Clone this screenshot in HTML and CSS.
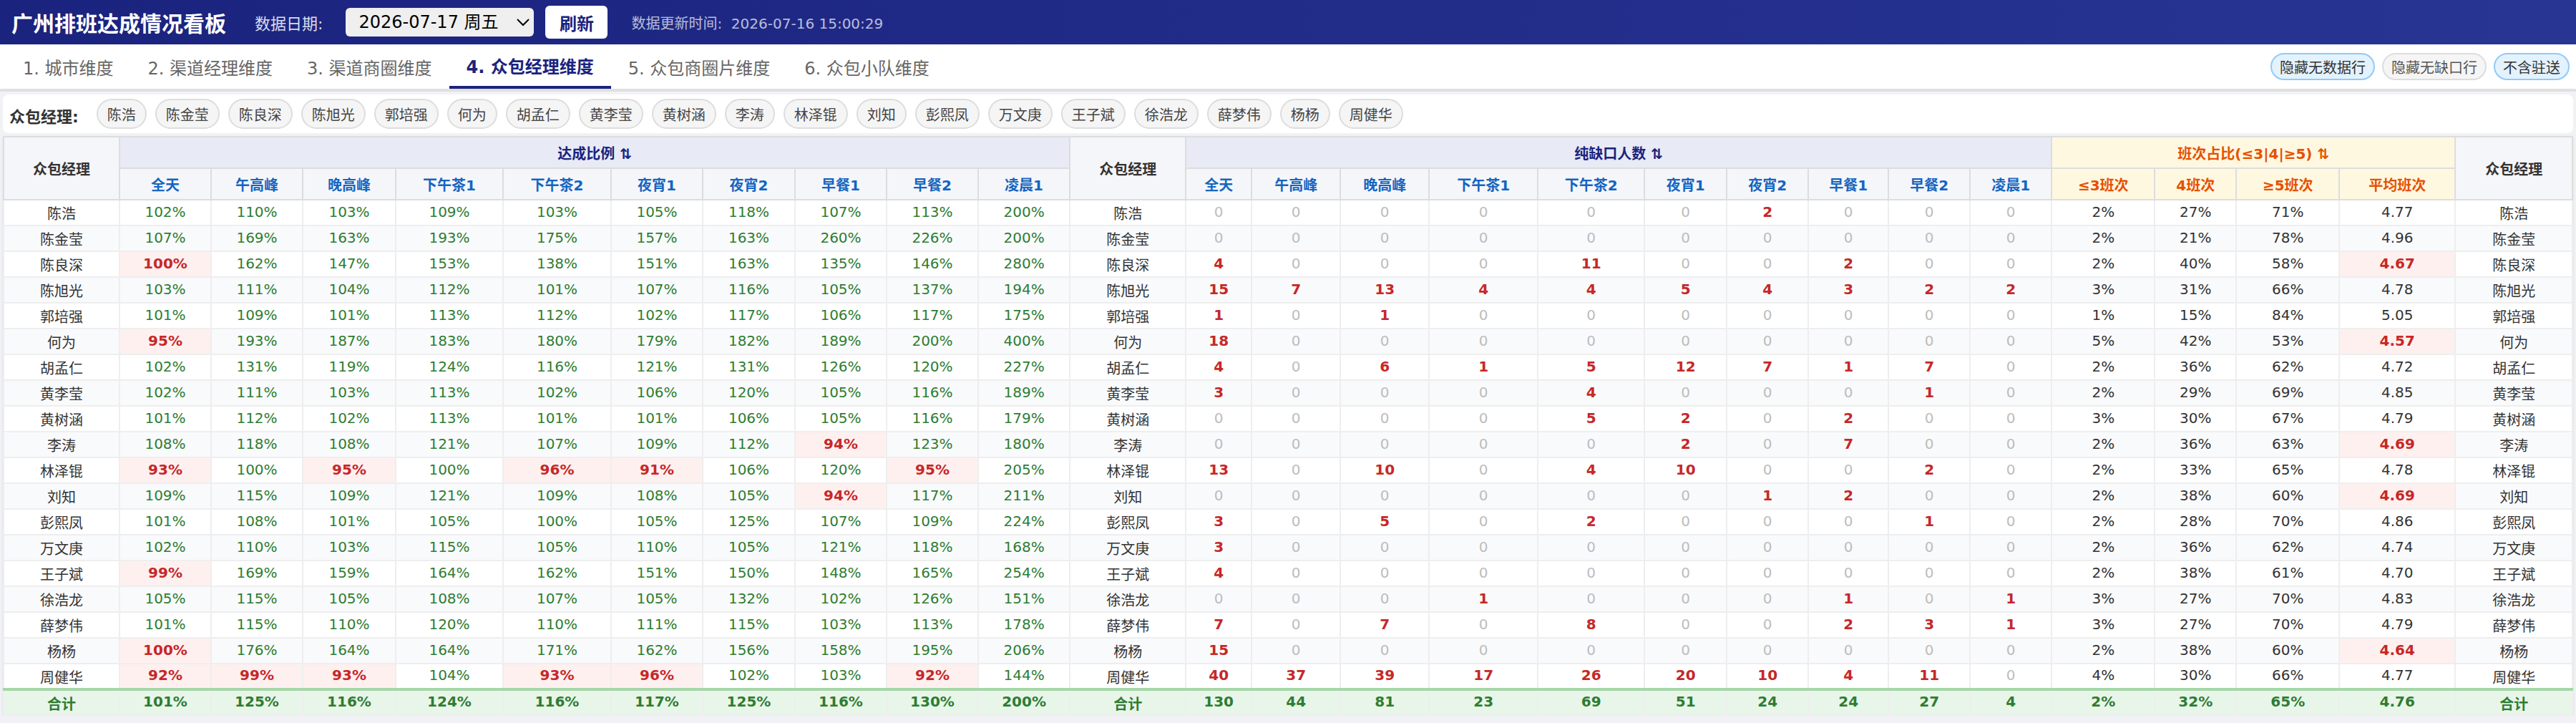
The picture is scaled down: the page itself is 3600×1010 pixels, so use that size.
FILE: index.html
```html
<!doctype html>
<html lang="zh">
<head>
<meta charset="utf-8">
<title>广州排班达成情况看板</title>
<link rel="stylesheet" href="styles.css">
</head>
<body>
<div class="top">
	<h1>广州排班达成情况看板</h1>
	<span class="top-label">数据日期:</span>
	<select class="date"><option>2026-07-17 周五</option></select>
	<button class="refresh">刷新</button>
	<span class="updated">数据更新时间:&nbsp;&nbsp;2026-07-16 15:00:29</span>
</div>
<div class="tabs">
	<a class="tab">1. 城市维度</a>
	<a class="tab">2. 渠道经理维度</a>
	<a class="tab">3. 渠道商圈维度</a>
	<a class="tab on">4. 众包经理维度</a>
	<a class="tab">5. 众包商圈片维度</a>
	<a class="tab">6. 众包小队维度</a>
	<div class="toggles">
		<span class="toggle on">隐藏无数据行</span>
		<span class="toggle">隐藏无缺口行</span>
		<span class="toggle on">不含驻送</span>
	</div>
</div>
<div class="filter">
	<b class="filter-label">众包经理:</b>
	<span class="chip">陈浩</span><span class="chip">陈金莹</span><span class="chip">陈良深</span><span class="chip">陈旭光</span><span class="chip">郭培强</span><span class="chip">何为</span><span class="chip">胡孟仁</span><span class="chip">黄李莹</span><span class="chip">黄树涵</span><span class="chip">李涛</span><span class="chip">林泽锟</span><span class="chip">刘知</span><span class="chip">彭熙凤</span><span class="chip">万文庚</span><span class="chip">王子斌</span><span class="chip">徐浩龙</span><span class="chip">薛梦伟</span><span class="chip">杨杨</span><span class="chip">周健华</span>
</div>
<div class="wrap">
<table>
	<colgroup>
		<col class="w162"><col class="w128"><col class="w128"><col class="w130"><col class="w150"><col class="w151"><col class="w128"><col class="w129"><col class="w128"><col class="w128"><col class="w128">
		<col class="w162"><col class="w92"><col class="w124"><col class="w124"><col class="w152"><col class="w149"><col class="w115"><col class="w114"><col class="w112"><col class="w114"><col class="w114">
		<col class="w144"><col class="w114"><col class="w144"><col class="w162"><col class="w164">
	</colgroup>
	<thead>
		<tr>
			<th class="name-h" rowspan="2">众包经理</th>
			<th class="group" colspan="10">达成比例 ⇅</th>
			<th class="name-h" rowspan="2">众包经理</th>
			<th class="group" colspan="10">纯缺口人数 ⇅</th>
			<th class="group shift" colspan="4">班次占比(≤3|4|≥5) ⇅</th>
			<th class="name-h" rowspan="2">众包经理</th>
		</tr>
		<tr>
			<th>全天</th><th>午高峰</th><th>晚高峰</th><th>下午茶1</th><th>下午茶2</th><th>夜宵1</th><th>夜宵2</th><th>早餐1</th><th>早餐2</th><th>凌晨1</th>
			<th>全天</th><th>午高峰</th><th>晚高峰</th><th>下午茶1</th><th>下午茶2</th><th>夜宵1</th><th>夜宵2</th><th>早餐1</th><th>早餐2</th><th>凌晨1</th>
			<th class="shift">≤3班次</th><th class="shift">4班次</th><th class="shift">≥5班次</th><th class="shift">平均班次</th>
		</tr>
	</thead>
	<tbody>
		<tr><td>陈浩</td><td class="g">102%</td><td class="g">110%</td><td class="g">103%</td><td class="g">109%</td><td class="g">103%</td><td class="g">105%</td><td class="g">118%</td><td class="g">107%</td><td class="g">113%</td><td class="g">200%</td><td>陈浩</td><td class="z">0</td><td class="z">0</td><td class="z">0</td><td class="z">0</td><td class="z">0</td><td class="z">0</td><td class="n">2</td><td class="z">0</td><td class="z">0</td><td class="z">0</td><td>2%</td><td>27%</td><td>71%</td><td>4.77</td><td>陈浩</td></tr>
		<tr><td>陈金莹</td><td class="g">107%</td><td class="g">169%</td><td class="g">163%</td><td class="g">193%</td><td class="g">175%</td><td class="g">157%</td><td class="g">163%</td><td class="g">260%</td><td class="g">226%</td><td class="g">200%</td><td>陈金莹</td><td class="z">0</td><td class="z">0</td><td class="z">0</td><td class="z">0</td><td class="z">0</td><td class="z">0</td><td class="z">0</td><td class="z">0</td><td class="z">0</td><td class="z">0</td><td>2%</td><td>21%</td><td>78%</td><td>4.96</td><td>陈金莹</td></tr>
		<tr><td>陈良深</td><td class="r">100%</td><td class="g">162%</td><td class="g">147%</td><td class="g">153%</td><td class="g">138%</td><td class="g">151%</td><td class="g">163%</td><td class="g">135%</td><td class="g">146%</td><td class="g">280%</td><td>陈良深</td><td class="n">4</td><td class="z">0</td><td class="z">0</td><td class="z">0</td><td class="n">11</td><td class="z">0</td><td class="z">0</td><td class="n">2</td><td class="z">0</td><td class="z">0</td><td>2%</td><td>40%</td><td>58%</td><td class="r">4.67</td><td>陈良深</td></tr>
		<tr><td>陈旭光</td><td class="g">103%</td><td class="g">111%</td><td class="g">104%</td><td class="g">112%</td><td class="g">101%</td><td class="g">107%</td><td class="g">116%</td><td class="g">105%</td><td class="g">137%</td><td class="g">194%</td><td>陈旭光</td><td class="n">15</td><td class="n">7</td><td class="n">13</td><td class="n">4</td><td class="n">4</td><td class="n">5</td><td class="n">4</td><td class="n">3</td><td class="n">2</td><td class="n">2</td><td>3%</td><td>31%</td><td>66%</td><td>4.78</td><td>陈旭光</td></tr>
		<tr><td>郭培强</td><td class="g">101%</td><td class="g">109%</td><td class="g">101%</td><td class="g">113%</td><td class="g">112%</td><td class="g">102%</td><td class="g">117%</td><td class="g">106%</td><td class="g">117%</td><td class="g">175%</td><td>郭培强</td><td class="n">1</td><td class="z">0</td><td class="n">1</td><td class="z">0</td><td class="z">0</td><td class="z">0</td><td class="z">0</td><td class="z">0</td><td class="z">0</td><td class="z">0</td><td>1%</td><td>15%</td><td>84%</td><td>5.05</td><td>郭培强</td></tr>
		<tr><td>何为</td><td class="r">95%</td><td class="g">193%</td><td class="g">187%</td><td class="g">183%</td><td class="g">180%</td><td class="g">179%</td><td class="g">182%</td><td class="g">189%</td><td class="g">200%</td><td class="g">400%</td><td>何为</td><td class="n">18</td><td class="z">0</td><td class="z">0</td><td class="z">0</td><td class="z">0</td><td class="z">0</td><td class="z">0</td><td class="z">0</td><td class="z">0</td><td class="z">0</td><td>5%</td><td>42%</td><td>53%</td><td class="r">4.57</td><td>何为</td></tr>
		<tr><td>胡孟仁</td><td class="g">102%</td><td class="g">131%</td><td class="g">119%</td><td class="g">124%</td><td class="g">116%</td><td class="g">121%</td><td class="g">131%</td><td class="g">126%</td><td class="g">120%</td><td class="g">227%</td><td>胡孟仁</td><td class="n">4</td><td class="z">0</td><td class="n">6</td><td class="n">1</td><td class="n">5</td><td class="n">12</td><td class="n">7</td><td class="n">1</td><td class="n">7</td><td class="z">0</td><td>2%</td><td>36%</td><td>62%</td><td>4.72</td><td>胡孟仁</td></tr>
		<tr><td>黄李莹</td><td class="g">102%</td><td class="g">111%</td><td class="g">103%</td><td class="g">113%</td><td class="g">102%</td><td class="g">106%</td><td class="g">120%</td><td class="g">105%</td><td class="g">116%</td><td class="g">189%</td><td>黄李莹</td><td class="n">3</td><td class="z">0</td><td class="z">0</td><td class="z">0</td><td class="n">4</td><td class="z">0</td><td class="z">0</td><td class="z">0</td><td class="n">1</td><td class="z">0</td><td>2%</td><td>29%</td><td>69%</td><td>4.85</td><td>黄李莹</td></tr>
		<tr><td>黄树涵</td><td class="g">101%</td><td class="g">112%</td><td class="g">102%</td><td class="g">113%</td><td class="g">101%</td><td class="g">101%</td><td class="g">106%</td><td class="g">105%</td><td class="g">116%</td><td class="g">179%</td><td>黄树涵</td><td class="z">0</td><td class="z">0</td><td class="z">0</td><td class="z">0</td><td class="n">5</td><td class="n">2</td><td class="z">0</td><td class="n">2</td><td class="z">0</td><td class="z">0</td><td>3%</td><td>30%</td><td>67%</td><td>4.79</td><td>黄树涵</td></tr>
		<tr><td>李涛</td><td class="g">108%</td><td class="g">118%</td><td class="g">108%</td><td class="g">121%</td><td class="g">107%</td><td class="g">109%</td><td class="g">112%</td><td class="r">94%</td><td class="g">123%</td><td class="g">180%</td><td>李涛</td><td class="z">0</td><td class="z">0</td><td class="z">0</td><td class="z">0</td><td class="z">0</td><td class="n">2</td><td class="z">0</td><td class="n">7</td><td class="z">0</td><td class="z">0</td><td>2%</td><td>36%</td><td>63%</td><td class="r">4.69</td><td>李涛</td></tr>
		<tr><td>林泽锟</td><td class="r">93%</td><td class="g">100%</td><td class="r">95%</td><td class="g">100%</td><td class="r">96%</td><td class="r">91%</td><td class="g">106%</td><td class="g">120%</td><td class="r">95%</td><td class="g">205%</td><td>林泽锟</td><td class="n">13</td><td class="z">0</td><td class="n">10</td><td class="z">0</td><td class="n">4</td><td class="n">10</td><td class="z">0</td><td class="z">0</td><td class="n">2</td><td class="z">0</td><td>2%</td><td>33%</td><td>65%</td><td>4.78</td><td>林泽锟</td></tr>
		<tr><td>刘知</td><td class="g">109%</td><td class="g">115%</td><td class="g">109%</td><td class="g">121%</td><td class="g">109%</td><td class="g">108%</td><td class="g">105%</td><td class="r">94%</td><td class="g">117%</td><td class="g">211%</td><td>刘知</td><td class="z">0</td><td class="z">0</td><td class="z">0</td><td class="z">0</td><td class="z">0</td><td class="z">0</td><td class="n">1</td><td class="n">2</td><td class="z">0</td><td class="z">0</td><td>2%</td><td>38%</td><td>60%</td><td class="r">4.69</td><td>刘知</td></tr>
		<tr><td>彭熙凤</td><td class="g">101%</td><td class="g">108%</td><td class="g">101%</td><td class="g">105%</td><td class="g">100%</td><td class="g">105%</td><td class="g">125%</td><td class="g">107%</td><td class="g">109%</td><td class="g">224%</td><td>彭熙凤</td><td class="n">3</td><td class="z">0</td><td class="n">5</td><td class="z">0</td><td class="n">2</td><td class="z">0</td><td class="z">0</td><td class="z">0</td><td class="n">1</td><td class="z">0</td><td>2%</td><td>28%</td><td>70%</td><td>4.86</td><td>彭熙凤</td></tr>
		<tr><td>万文庚</td><td class="g">102%</td><td class="g">110%</td><td class="g">103%</td><td class="g">115%</td><td class="g">105%</td><td class="g">110%</td><td class="g">105%</td><td class="g">121%</td><td class="g">118%</td><td class="g">168%</td><td>万文庚</td><td class="n">3</td><td class="z">0</td><td class="z">0</td><td class="z">0</td><td class="z">0</td><td class="z">0</td><td class="z">0</td><td class="z">0</td><td class="z">0</td><td class="z">0</td><td>2%</td><td>36%</td><td>62%</td><td>4.74</td><td>万文庚</td></tr>
		<tr><td>王子斌</td><td class="r">99%</td><td class="g">169%</td><td class="g">159%</td><td class="g">164%</td><td class="g">162%</td><td class="g">151%</td><td class="g">150%</td><td class="g">148%</td><td class="g">165%</td><td class="g">254%</td><td>王子斌</td><td class="n">4</td><td class="z">0</td><td class="z">0</td><td class="z">0</td><td class="z">0</td><td class="z">0</td><td class="z">0</td><td class="z">0</td><td class="z">0</td><td class="z">0</td><td>2%</td><td>38%</td><td>61%</td><td>4.70</td><td>王子斌</td></tr>
		<tr><td>徐浩龙</td><td class="g">105%</td><td class="g">115%</td><td class="g">105%</td><td class="g">108%</td><td class="g">107%</td><td class="g">105%</td><td class="g">132%</td><td class="g">102%</td><td class="g">126%</td><td class="g">151%</td><td>徐浩龙</td><td class="z">0</td><td class="z">0</td><td class="z">0</td><td class="n">1</td><td class="z">0</td><td class="z">0</td><td class="z">0</td><td class="n">1</td><td class="z">0</td><td class="n">1</td><td>3%</td><td>27%</td><td>70%</td><td>4.83</td><td>徐浩龙</td></tr>
		<tr><td>薛梦伟</td><td class="g">101%</td><td class="g">115%</td><td class="g">110%</td><td class="g">120%</td><td class="g">110%</td><td class="g">111%</td><td class="g">115%</td><td class="g">103%</td><td class="g">113%</td><td class="g">178%</td><td>薛梦伟</td><td class="n">7</td><td class="z">0</td><td class="n">7</td><td class="z">0</td><td class="n">8</td><td class="z">0</td><td class="z">0</td><td class="n">2</td><td class="n">3</td><td class="n">1</td><td>3%</td><td>27%</td><td>70%</td><td>4.79</td><td>薛梦伟</td></tr>
		<tr><td>杨杨</td><td class="r">100%</td><td class="g">176%</td><td class="g">164%</td><td class="g">164%</td><td class="g">171%</td><td class="g">162%</td><td class="g">156%</td><td class="g">158%</td><td class="g">195%</td><td class="g">206%</td><td>杨杨</td><td class="n">15</td><td class="z">0</td><td class="z">0</td><td class="z">0</td><td class="z">0</td><td class="z">0</td><td class="z">0</td><td class="z">0</td><td class="z">0</td><td class="z">0</td><td>2%</td><td>38%</td><td>60%</td><td class="r">4.64</td><td>杨杨</td></tr>
		<tr><td>周健华</td><td class="r">92%</td><td class="r">99%</td><td class="r">93%</td><td class="g">104%</td><td class="r">93%</td><td class="r">96%</td><td class="g">102%</td><td class="g">103%</td><td class="r">92%</td><td class="g">144%</td><td>周健华</td><td class="n">40</td><td class="n">37</td><td class="n">39</td><td class="n">17</td><td class="n">26</td><td class="n">20</td><td class="n">10</td><td class="n">4</td><td class="n">11</td><td class="z">0</td><td>4%</td><td>30%</td><td>66%</td><td>4.77</td><td>周健华</td></tr>
		<tr class="total"><td>合计</td><td>101%</td><td>125%</td><td>116%</td><td>124%</td><td>116%</td><td>117%</td><td>125%</td><td>116%</td><td>130%</td><td>200%</td><td>合计</td><td>130</td><td>44</td><td>81</td><td>23</td><td>69</td><td>51</td><td>24</td><td>24</td><td>27</td><td>4</td><td>2%</td><td>32%</td><td>65%</td><td>4.76</td><td>合计</td></tr>
	</tbody>
</table>
</div>
</body>
</html>
```

FILE: styles.css
```css
* {
	box-sizing: border-box;
}
body {
	margin: 0;
	background: #f0f2f5;
	color: #333;
	font-family: "DejaVu Sans", "Noto Sans CJK SC", sans-serif;
	font-size: 20px;
}

/* top bar */
.top {
	display: flex;
	align-items: center;
	height: 62px;
	padding-left: 16px;
	background: linear-gradient(90deg, #1a237e, #283593);
	color: #fff;
}
.top h1 {
	margin: 0 40px 0 0;
	font-size: 30px;
}
.top-label {
	margin-right: 32px;
	font-size: 22px;
	color: rgba(255, 255, 255, 0.85);
}
/* zoom, so the native arrow comes out as heavy as in the picture */
.date {
	zoom: 2;
	width: 131.5px;
	height: 20px;
	padding: 0 5px;
	border: none;
	border-radius: 3px;
	background-color: #efefef;
	color: #000;
	font-family: inherit;
	font-size: 12px;
}
.refresh {
	width: 87px;
	height: 46px;
	margin: 0 33px 0 16px;
	border: none;
	border-radius: 6px;
	background: #fff;
	color: #1a237e;
	font-family: inherit;
	font-size: 24px;
	font-weight: bold;
}
.updated {
	color: rgba(255, 255, 255, 0.7);
}

/* tabs */
.tabs {
	display: flex;
	align-items: stretch;
	height: 66px;
	padding: 0 9px 0 8px;
	border-bottom: 4px solid #e0e0e0;
	background: #fff;
	font-size: 24px;
}
.tab {
	display: flex;
	align-items: center;
	height: 62px;
	padding: 0 24px;
	color: #666;
}
.tab.on {
	border-bottom: 4px solid #1a237e;
	color: #1a237e;
	font-weight: bold;
}
.toggles {
	display: flex;
	align-items: center;
	gap: 10px;
	margin-left: auto;
}
.toggle {
	display: flex;
	align-items: center;
	height: 38px;
	padding: 0 11px;
	border: 2px solid #ddd;
	border-radius: 19px;
	background: #f5f5f5;
	color: #555;
	font-size: 20px;
}
.toggle.on {
	border-color: #90caf9;
	background: #e3f2fd;
	color: #333;
}

/* manager filter */
.filter {
	display: flex;
	align-items: center;
	gap: 12px;
	height: 54px;
	margin: 4px;
	padding: 0 9px;
	border-radius: 8px;
	background: #fff;
}
.filter-label {
	margin: 4px 13px 0 0;
	font-size: 22px;
}
.chip {
	display: flex;
	align-items: center;
	height: 42px;
	padding: 0 13px;
	border: 2px solid #ddd;
	border-radius: 21px;
	background: #f5f5f5;
	color: #444;
}

/* table */
.wrap {
	margin: 0 4px;
	box-shadow: 0 2px 4px rgba(0, 0, 0, 0.08);
}
table {
	width: 3592px;
	border-collapse: collapse;
	table-layout: fixed;
	background: #fff;
}
th, td {
	padding: 0 4px;
	text-align: center;
	white-space: nowrap;
}
th {
	height: 44px;
	border: 2px solid #ddd;
	background: #f5f6fa;
	color: #1565c0;
}
th.group {
	background: #e8eaf6;
	color: #1a237e;
}
th.name-h {
	color: #333;
}
th.shift {
	background: #fff8e1;
	color: #e65100;
}
td {
	height: 36px;
	padding-bottom: 3px;
	border: 2px solid #eee;
}
/* the name columns sit a little lower than the figures */
td:nth-child(1), td:nth-child(12), td:nth-child(27) {
	padding-top: 1px;
	padding-bottom: 0;
}
tbody tr:nth-child(even) td {
	background: #f9fafc;
}
td.g {
	color: #2e7d32;
}
td.z {
	color: #bdbdbd;
}
td.n {
	color: #c62828;
	font-weight: bold;
}
tbody tr td.r {
	background: #fff0f0;
	color: #c62828;
	font-weight: bold;
}
tbody tr.total td {
	border-top: 4px solid #a5d6a7;
	background: #e8f5e9;
	color: #2e7d32;
	font-weight: bold;
}

.w92 { width: 92px; }
.w112 { width: 112px; }
.w114 { width: 114px; }
.w115 { width: 115px; }
.w124 { width: 124px; }
.w128 { width: 128px; }
.w129 { width: 129px; }
.w130 { width: 130px; }
.w144 { width: 144px; }
.w149 { width: 149px; }
.w150 { width: 150px; }
.w151 { width: 151px; }
.w152 { width: 152px; }
.w162 { width: 162px; }
.w164 { width: 164px; }
```
